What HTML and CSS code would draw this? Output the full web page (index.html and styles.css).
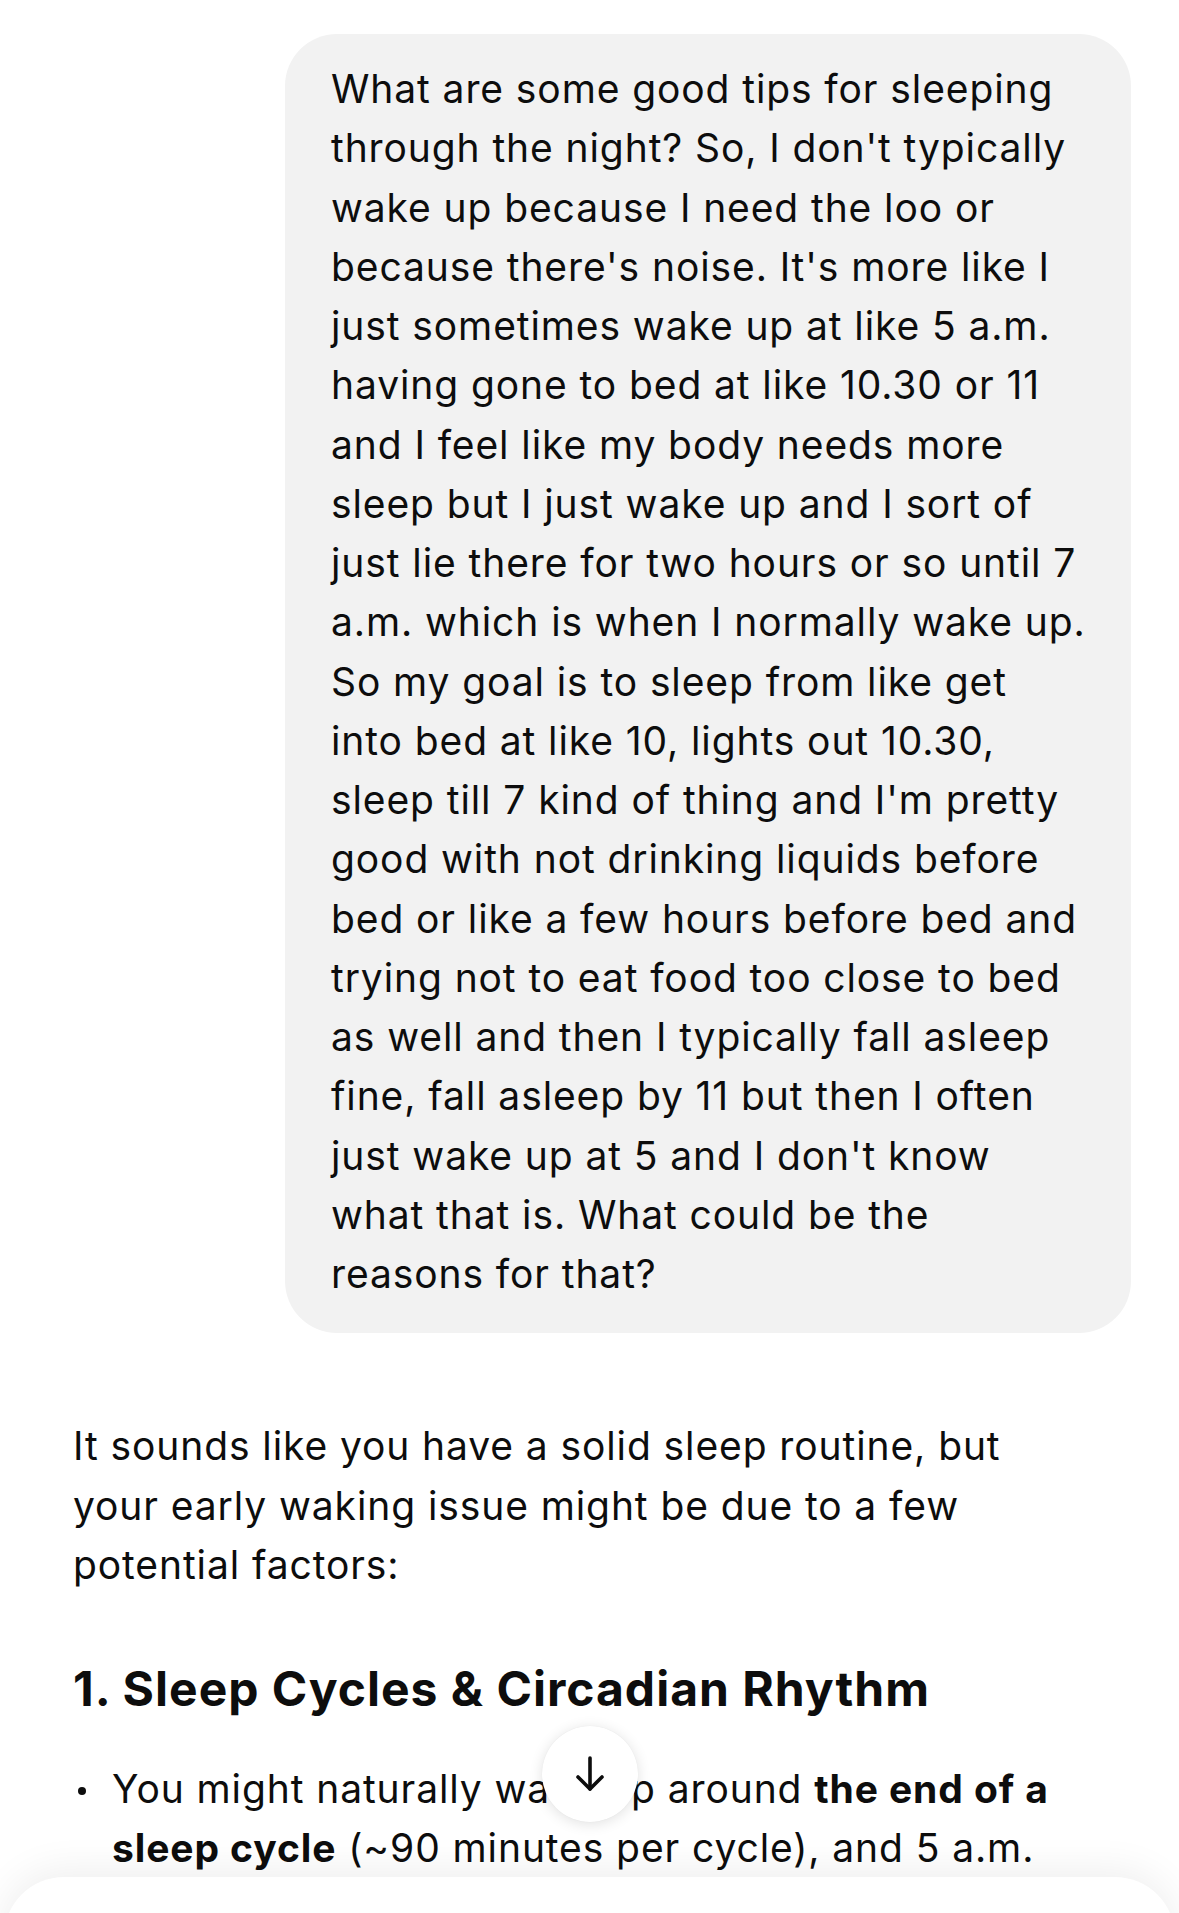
FILE: index.html
```html
<!DOCTYPE html>
<html lang="en">
<head>
<meta charset="utf-8">
<title>Chat</title>
<link rel="stylesheet" href="styles.css">
</head>
<body>
<main class="thread">
  <div class="user-row">
    <div class="bubble">What are some good tips for sleeping<br>through the night? So, I don't typically<br>wake up because I need the loo or<br>because there's noise. It's more like I<br>just sometimes wake up at like 5 a.m.<br>having gone to bed at like 10.30 or 11<br>and I feel like my body needs more<br>sleep but I just wake up and I sort of<br>just lie there for two hours or so until 7<br>a.m. which is when I normally wake up.<br>So my goal is to sleep from like get<br>into bed at like 10, lights out 10.30,<br>sleep till 7 kind of thing and I'm pretty<br>good with not drinking liquids before<br>bed or like a few hours before bed and<br>trying not to eat food too close to bed<br>as well and then I typically fall asleep<br>fine, fall asleep by 11 but then I often<br>just wake up at 5 and I don't know<br>what that is. What could be the<br>reasons for that?</div>
  </div>
  <section class="assistant">
    <p class="para">It sounds like you have a solid sleep routine, but<br>your early waking issue might be due to a few<br>potential factors:</p>
    <h3 class="heading">1. Sleep Cycles &amp; Circadian Rhythm</h3>
    <ul class="list">
      <li class="item">You might naturally wake up around <b>the end of a<br>sleep cycle</b> (~90 minutes per cycle), and 5 a.m.</li>
    </ul>
  </section>
</main>
<button class="scroll-btn" aria-label="Scroll down">
  <svg width="36" height="40" viewBox="0 0 36 40" fill="none" stroke="#0d0d0d" stroke-width="3.6" stroke-linecap="round" stroke-linejoin="round"><path d="M18 4v31"/><path d="M6 23l12 12 12-12"/></svg>
</button>
<div class="composer"></div>
</body>
</html>
```
FILE: styles.css
```css
html, body {
  margin: 0;
  padding: 0;
}
body {
  width: 1179px;
  height: 1913px;
  overflow: hidden;
  position: relative;
  background: #ffffff;
  color: #0d0d0d;
  font-family: Inter, "Noto Sans", "Liberation Sans", sans-serif;
  font-size: 39px;
  line-height: 59.25px;
  letter-spacing: 0.9px;
}
.thread {
  padding-top: 34px;
}
.user-row {
  display: flex;
  justify-content: flex-end;
  padding-right: 48px;
}
.bubble {
  box-sizing: border-box;
  width: 846px;
  background: #f2f2f2;
  border-radius: 52px;
  padding: 25px 30px 30px 46px;
}
.assistant {
  padding: 83px 30px 0 73px;
}
.para {
  margin: 0;
}
.heading {
  margin: 65px 0 0;
  font-size: 48px;
  line-height: 60px;
  font-weight: 700;
  letter-spacing: 1px;
}
.list {
  list-style: none;
  margin: 40px 0 0;
  padding: 0;
}
.item {
  position: relative;
  padding-left: 39px;
}
.item::before {
  content: "";
  position: absolute;
  left: 5px;
  top: 28px;
  width: 8px;
  height: 8px;
  border-radius: 50%;
  background: #0d0d0d;
}
.item b {
  font-weight: 700;
}
.scroll-btn {
  position: absolute;
  left: 542px;
  top: 1726px;
  width: 96px;
  height: 96px;
  border-radius: 50%;
  border: none;
  background: #ffffff;
  box-shadow: 0 2px 14px rgba(0, 0, 0, 0.12), 0 0 1px rgba(0, 0, 0, 0.08);
  display: flex;
  align-items: center;
  justify-content: center;
  padding: 0;
}
.composer {
  position: absolute;
  left: 4px;
  right: 4px;
  top: 1877px;
  height: 120px;
  background: #ffffff;
  border-radius: 60px 60px 0 0;
  box-shadow: 0 -6px 40px rgba(0, 0, 0, 0.07);
}
```
